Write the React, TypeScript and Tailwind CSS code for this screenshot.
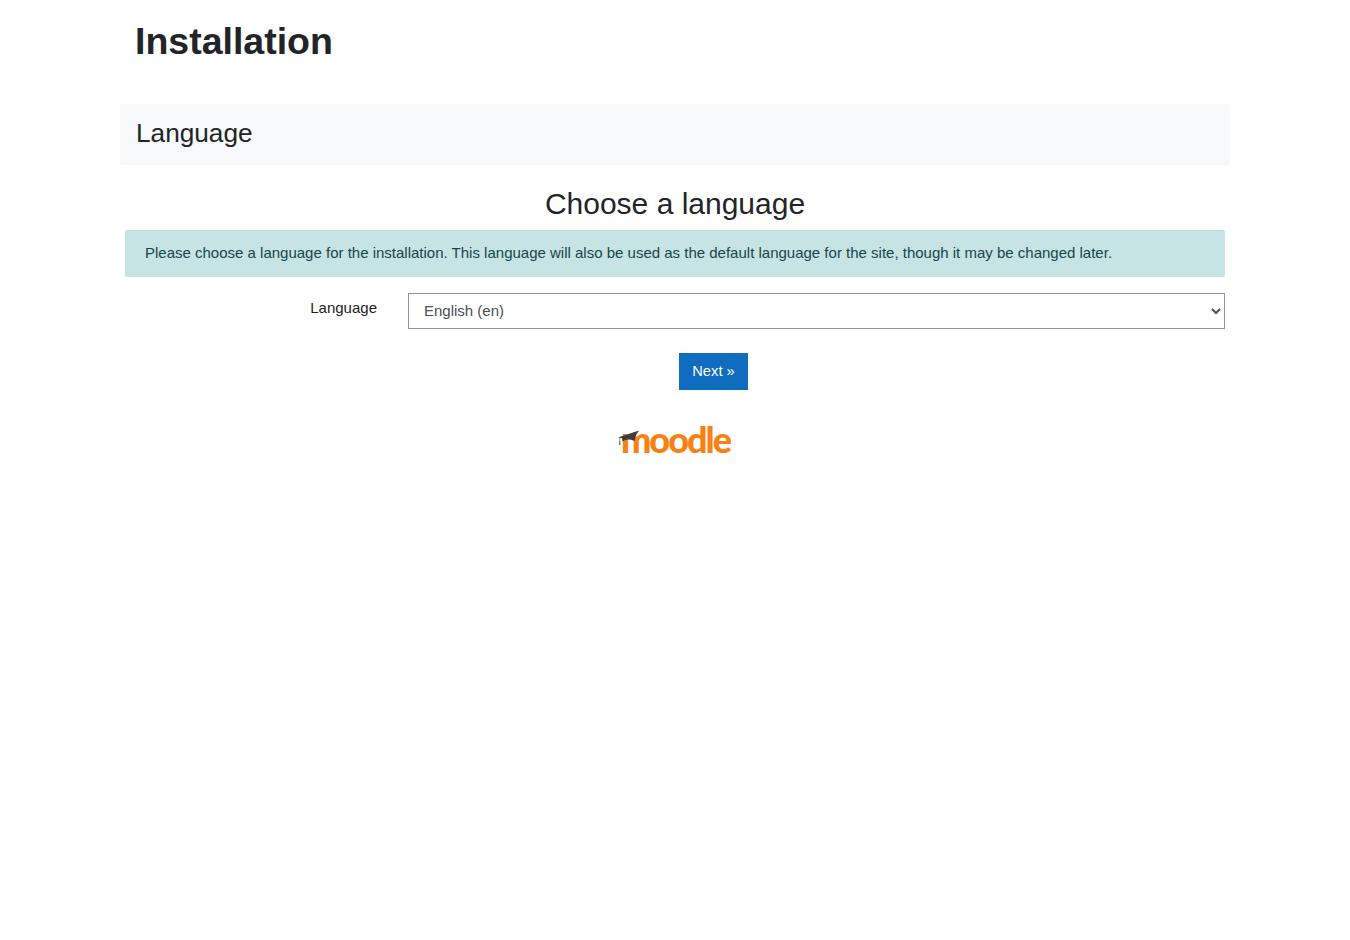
export default function App() {
  return (
    <div className="min-h-[940px] bg-white text-[#212529] font-['Liberation_Sans',Arial,sans-serif]">
      <div className="w-[1110px] mx-auto">
        <header className="h-[104px] pl-[15px] pt-[18px]">
          <h1 className="text-[37.5px] leading-[46px] font-bold">Installation</h1>
        </header>

        <div className="h-[61px] bg-[#f8f9fa] pl-4 flex items-center rounded-[3px]">
          <h2 className="text-[26.2px] leading-[32px] relative top-[-2px]">Language</h2>
        </div>

        <div className="px-[5px]">
          <h3 className="mt-[21px] text-[30px] leading-[36px] text-center">Choose a language</h3>

          <div className="mt-[8px] h-[47px] bg-[#c7e4e5] border-t border-[#bcdcdd] rounded-[2px] pl-5 pb-[2px] flex items-center text-[#14474a] text-[15px]">
            Please choose a language for the installation. This language will also be used as the default language for the site, though it may be changed later.
          </div>

          <div className="mt-4 flex">
            <label htmlFor="lang" className="w-[253px] pt-[5px] pr-px text-right text-[15px] leading-[20px] text-[#1d2125]">
              Language
            </label>
            <select
              id="lang"
              defaultValue="en"
              className="ml-[30px] w-[817px] h-9 pl-[11px] pb-[2px] bg-white border border-[#8f959e] text-[#495057] text-[15px]"
            >
              <option value="en">English (en)</option>
            </select>
          </div>

          <div className="mt-6 pl-[554px]">
            <button className="w-[69px] h-[37px] bg-[#0f6cbf] text-white text-[14.7px] flex items-center justify-center">
              Next »
            </button>
          </div>
        </div>

        <div className="mt-[34px] flex justify-center">
          <div className="relative w-[114px] h-[34px]">
            <span className="absolute left-[3px] top-[-4px] text-[#f98012] text-[36px] leading-[38px] font-black tracking-[-2px] font-['Lato',sans-serif]">
              moodle
            </span>
            <svg className="absolute left-0 top-[6px]" width="24" height="18" viewBox="0 0 24 18">
              <path d="M0 7.5 L21 0.5 L18 5 L16.5 11 Q9 8 4.5 11.5 L4 8.2 Z" fill="#3c3c3c" />
              <path d="M1.5 7.5 L1 15 L2.5 15 L2 7.5 Z" fill="#6f6f6f" />
            </svg>
          </div>
        </div>
      </div>
    </div>
  )
}
